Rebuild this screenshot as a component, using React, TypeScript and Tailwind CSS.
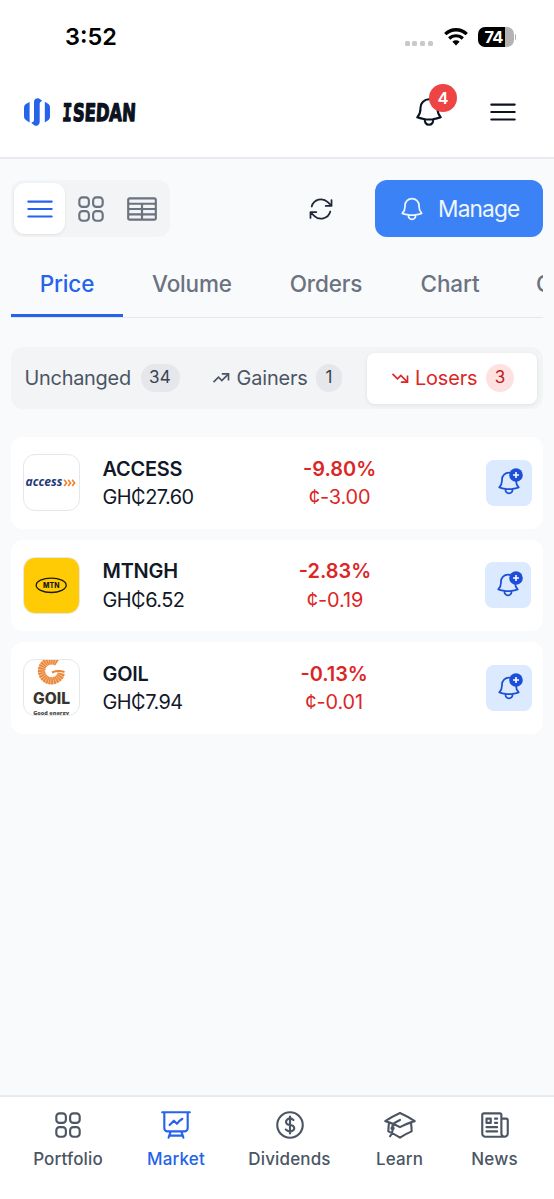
import type { ReactNode } from "react"
import {
  HiBars3,
  HiOutlineAcademicCap,
  HiOutlineArrowPath,
  HiOutlineBell,
  HiOutlineCurrencyDollar,
  HiOutlineNewspaper,
  HiOutlinePresentationChartLine,
  HiOutlineSquares2X2,
  HiOutlineTableCells,
} from "react-icons/hi2"

function AccessLogo() {
  return (
    <svg viewBox="0 0 55 55" className="size-full">
      <text x="1.5" y="31" fontFamily="Open Sans, sans-serif" fontSize="11.5" fontWeight="700" fontStyle="italic" fill="#1f3a76" textLength="37" lengthAdjust="spacingAndGlyphs">
        access
      </text>
      <g fill="none" stroke="#ee8434" strokeWidth="1.7">
        <path d="m40.2 24.7 2.4 3.2-2.4 3.2" />
        <path d="m44.2 24.7 2.4 3.2-2.4 3.2" />
        <path d="m48.2 24.7 2.4 3.2-2.4 3.2" />
      </g>
    </svg>
  )
}

function MtnLogo() {
  return (
    <svg viewBox="0 0 55 55" className="size-full bg-[#ffcb05]">
      <ellipse cx="27.2" cy="27.3" rx="15" ry="7.2" fill="none" stroke="#1c1a10" strokeWidth="1.3" />
      <text x="19" y="30" fontFamily="Inter, sans-serif" fontSize="7.5" fontWeight="800" fill="#1c1a10" textLength="16.4" lengthAdjust="spacingAndGlyphs">
        MTN
      </text>
    </svg>
  )
}

function GoilLogo() {
  return (
    <svg viewBox="0 0 55 55" className="size-full">
      <path d="M33 2.5A10 10 0 1 0 37.3 13" fill="none" stroke="#f8c193" strokeWidth="7.2" />
      <path d="M33 2.5A10 10 0 1 0 37.3 13" fill="none" stroke="#ea8436" strokeWidth="7.2" strokeDasharray="1.5 0.8" />
      <path d="M28 12.5q6-2.5 12.500-.5" fill="none" stroke="#ea8436" strokeWidth="2" />
      <text x="9" y="43.8" fontFamily="Inter, sans-serif" fontSize="15.5" fontWeight="800" fill="#37362f" textLength="37" lengthAdjust="spacingAndGlyphs">
        GOIL
      </text>
      <text x="9.2" y="54.5" fontFamily="Open Sans, sans-serif" fontSize="5.5" fontWeight="800" fill="#4a4a46" textLength="36" lengthAdjust="spacingAndGlyphs">
        Good energy
      </text>
    </svg>
  )
}

const stocks = [
  { symbol: "ACCESS", price: "GH₵27.60", percent: "-9.80%", change: "¢-3.00", logo: <AccessLogo /> },
  { symbol: "MTNGH", price: "GH₵6.52", percent: "-2.83%", change: "¢-0.19", logo: <MtnLogo /> },
  { symbol: "GOIL", price: "GH₵7.94", percent: "-0.13%", change: "¢-0.01", logo: <GoilLogo /> },
]

function StatusBar() {
  return (
    <div className="flex h-[67px] items-center justify-between pl-[65px] pr-[38px] pt-[7px] text-black">
      <span className="text-[23.5px] font-semibold leading-none">3:52</span>
      <div className="flex items-center">
        <div className="mr-[11px] mt-[12px] flex gap-[2.6px]">
          {[0, 1, 2, 3].map((i) => (
            <span key={i} className="size-[5px] rounded-[1.5px] bg-[#c9c9c9]" />
          ))}
        </div>
        <svg width="24" height="18" viewBox="0 0 24 18" fill="none" stroke="#000" className="mr-[10px]">
          <path d="M1.3 6.1a15.3 15.3 0 0 1 21.4 0" strokeWidth="3.4" />
          <path d="M5.2 10.5a9.8 9.8 0 0 1 13.6 0" strokeWidth="3.2" />
          <path d="M12 17.4 8.4 13.8a5.2 5.2 0 0 1 7.2 0Z" fill="#000" stroke="none" />
        </svg>
        <div className="flex h-[20px] w-[36px] items-center rounded-[7px] bg-[linear-gradient(to_right,#000_76%,#b3b3b3_76%)] pl-[7px] text-[16.5px] font-bold leading-none tracking-[-0.9px] text-white">
          74
        </div>
        <span className="ml-[1px] h-[6px] w-[1.5px] rounded-r bg-[#b3b3b3]" />
      </div>
    </div>
  )
}

function Header() {
  return (
    <header className="flex h-[92px] items-center justify-between border-b-2 border-[#e8eaef] pl-6 pr-[34px]">
      <div className="flex items-center gap-[8px]">
        <svg width="27" height="28" viewBox="0 0 27 28" fill="#2563eb">
          <path d="M5.6 4v20.4L1.8 22Q0 20.8 0 18.6V9.4Q0 7.2 1.8 6Z" />
          <path d="M20.8 3.8 24.5 6Q26 7.2 26 9.4v9.2q0 2.2-1.5 3.4l-3.7 2.4Z" />
          <path d="M18.2 2.8 15 .5Q13.3-.3 11.6.8 10 1.8 10 4v18.2q0 1.8-2.8 2.6l3.4 2.6q1.6.9 3.400-.2 1.7-1.1 1.7-3.2V5.5q0-1.5 2.5-2.700Z" />
        </svg>
        <svg width="84" height="28" viewBox="0 0 84 28">
          {/* slab I from the mono cut, the rest condensed */}
          <g
            transform="translate(3 22.5) skewX(-3)"
            fill="#0b1220"
            stroke="#0b1220"
            strokeWidth="1.3"
            strokeLinejoin="round"
            fontSize="24"
            fontWeight="700"
          >
            <text fontFamily="DejaVu Sans Mono, monospace" textLength="9.5" lengthAdjust="spacingAndGlyphs">I</text>
            <text x="10.5" fontFamily="DejaVu Sans, sans-serif" textLength="63" lengthAdjust="spacingAndGlyphs">SEDAN</text>
          </g>
        </svg>
      </div>
      <div className="flex items-center gap-[40px] text-[#0b1220]">
        <button className="relative">
          <HiOutlineBell className="size-[34px]" />
          <span className="absolute -right-[11px] -top-[11px] flex size-[28px] items-center justify-center rounded-full bg-[#ef4444] text-[16.5px] font-semibold text-white">
            4
          </span>
        </button>
        <HiBars3 className="size-[34px]" />
      </div>
    </header>
  )
}

function Toolbar() {
  return (
    <div className="flex h-[57px] items-center">
      <div className="flex h-[57px] w-[159px] items-center rounded-xl bg-[#f3f4f6] px-[3px] text-[#6b7280]">
        <button className="flex size-[51px] items-center justify-center rounded-[11px] bg-white text-[#2563eb] shadow-[0_1px_3px_rgba(0,0,0,0.08)]">
          <HiBars3 className="size-[34px]" />
        </button>
        <button className="flex size-[51px] items-center justify-center">
          <HiOutlineSquares2X2 className="size-[34px]" />
        </button>
        <button className="flex size-[51px] items-center justify-center">
          <HiOutlineTableCells className="size-[34px]" />
        </button>
      </div>
      <HiOutlineArrowPath className="ml-auto size-[28px] text-[#1f2937]" />
      <button className="ml-[40px] flex h-[57px] w-[168px] items-center gap-[12px] rounded-xl bg-[#3b82f6] pl-[23px] text-[22.7px] text-[#eff6ff]">
        <HiOutlineBell className="size-[28px]" />
        <span className="pt-[2px] tracking-[-0.85px]">Manage</span>
      </button>
    </div>
  )
}

function Tabs() {
  return (
    <nav className="mt-[11px] flex h-[70px] overflow-hidden border-b border-[#e5e7eb] pl-px text-[22.5px] font-[550] tracking-[-0.15px] text-[#6b7280]">
      <span className="-ml-px flex w-[112px] shrink-0 items-center justify-center border-b-[3px] border-[#2563eb] pt-[5px] text-[#2563eb]">Price</span>
      <span className="flex w-[138px] shrink-0 items-center justify-center pt-[2px]">Volume</span>
      <span className="flex w-[130px] shrink-0 items-center justify-center pt-[2px]">Orders</span>
      <span className="flex w-[118px] shrink-0 items-center justify-center pt-[2px]">Chart</span>
      <span className="flex shrink-0 items-center pl-[27px] pt-[2px]">Orderbook</span>
    </nav>
  )
}

function TrendIcon({ down = false }: { down?: boolean }) {
  return (
    <svg
      width="20"
      height="20"
      viewBox="0 0 24 24"
      fill="none"
      stroke="currentColor"
      strokeWidth="2"
      className={down ? "-scale-y-100" : ""}
    >
      <path d="M13 7h8v8" />
      <path d="m21 7-8 8-4-4-6 6" />
    </svg>
  )
}

function Filters() {
  return (
    <div className="mt-[29px] flex h-[62px] items-center rounded-xl bg-[#f3f4f6] text-[19.9px] tracking-[-0.15px] text-[#4b5563]">
      <div className="flex items-center pl-[13.5px]">
        <span className="w-[116px] pt-px tracking-[-0.25px]">Unchanged</span>
        <span className="flex h-[28px] w-[39px] items-center justify-center rounded-full bg-[#e5e7eb] text-[17px] tracking-[0.3px] text-[#374151]">34</span>
      </div>
      <div className="ml-[31px] flex items-center">
        <TrendIcon />
        <span className="ml-[6px] w-[79.5px] pt-px">Gainers</span>
        <span className="flex h-[28px] w-[26px] items-center justify-center rounded-full bg-[#e5e7eb] text-[17px] text-[#374151]">1</span>
      </div>
      <div className="ml-auto mr-[6px] flex h-[51px] w-[170px] items-center rounded-lg bg-white pl-[23px] text-[#dc2626] shadow-[0_1px_4px_rgba(0,0,0,0.08)]">
        <TrendIcon down />
        <span className="ml-[5px] w-[71px] pt-px">Losers</span>
        <span className="flex h-[28px] w-[28px] items-center justify-center rounded-full bg-[#fee2e2] text-[17px] text-[#b91c1c]">3</span>
      </div>
    </div>
  )
}

function StockRow({ symbol, price, percent, change, logo }: { symbol: string; price: string; percent: string; change: string; logo: ReactNode }) {
  return (
    <div className="flex h-[91.5px] items-center justify-between rounded-xl bg-white pl-[12px] pr-[11.5px] text-[19.9px] leading-[28.4px]">
      <div className="flex items-center gap-[22.5px] text-[#111827]">
        <div className="size-[57px] overflow-hidden rounded-xl border border-[#e5e7eb]">{logo}</div>
        <div className="pt-px">
          <p className="font-semibold tracking-[-0.2px]">{symbol}</p>
          <p className="tracking-[-0.5px]">{price}</p>
        </div>
      </div>
      <div className="pt-px text-center text-[#dc2626]">
        <p className="font-semibold">{percent}</p>
        <p className="tracking-[-0.1px]">{change}</p>
      </div>
      <button className="relative flex size-[46px] items-center justify-center rounded-lg bg-[#dbeafe] text-[#1d4ed8]">
        <HiOutlineBell className="size-[28px]" />
        <svg viewBox="0 0 14 14" className="absolute left-[23.5px] top-[8.5px] size-[14px]">
          <circle cx="7" cy="7" r="6.8" fill="currentColor" />
          <path d="M7 4v6M4 7h6" stroke="#fff" strokeWidth="1.6" />
        </svg>
      </button>
    </div>
  )
}

function BottomNav() {
  return (
    <nav className="flex h-[104px] border-t-2 border-[#e8eaee] bg-white pl-[11px] pt-[11px] text-[17px] font-medium tracking-[0.15px] text-[#4b5563]">
      <div className="flex w-[114px] flex-col items-center gap-[5px]">
        <HiOutlineSquares2X2 className="size-[34px]" />
        <span>Portfolio</span>
      </div>
      <div className="flex w-[102px] flex-col items-center gap-[5px] text-[#2563eb]">
        <HiOutlinePresentationChartLine className="size-[34px]" />
        <span>Market</span>
      </div>
      <div className="flex w-[125px] flex-col items-center gap-[5px]">
        <HiOutlineCurrencyDollar className="size-[34px]" />
        <span>Dividends</span>
      </div>
      <div className="flex w-[95px] flex-col items-center gap-[5px]">
        <HiOutlineAcademicCap className="size-[34px]" />
        <span>Learn</span>
      </div>
      <div className="flex w-[95px] flex-col items-center gap-[5px]">
        <HiOutlineNewspaper className="size-[34px]" />
        <span>News</span>
      </div>
    </nav>
  )
}

export default function App() {
  return (
    <div className="flex h-[1199px] w-[554px] flex-col overflow-hidden bg-[#f9fafb] font-['Inter',sans-serif]">
      <div className="bg-white">
        <StatusBar />
        <Header />
      </div>

      <main className="flex-1 px-[11px] pt-[21px]">
        <Toolbar />
        <Tabs />
        <Filters />

        {/* LOSERS */}
        <div className="mt-[28px] flex flex-col gap-[11px]">
          {stocks.map((stock) => (
            <StockRow key={stock.symbol} {...stock} />
          ))}
        </div>
      </main>

      <BottomNav />
    </div>
  )
}
